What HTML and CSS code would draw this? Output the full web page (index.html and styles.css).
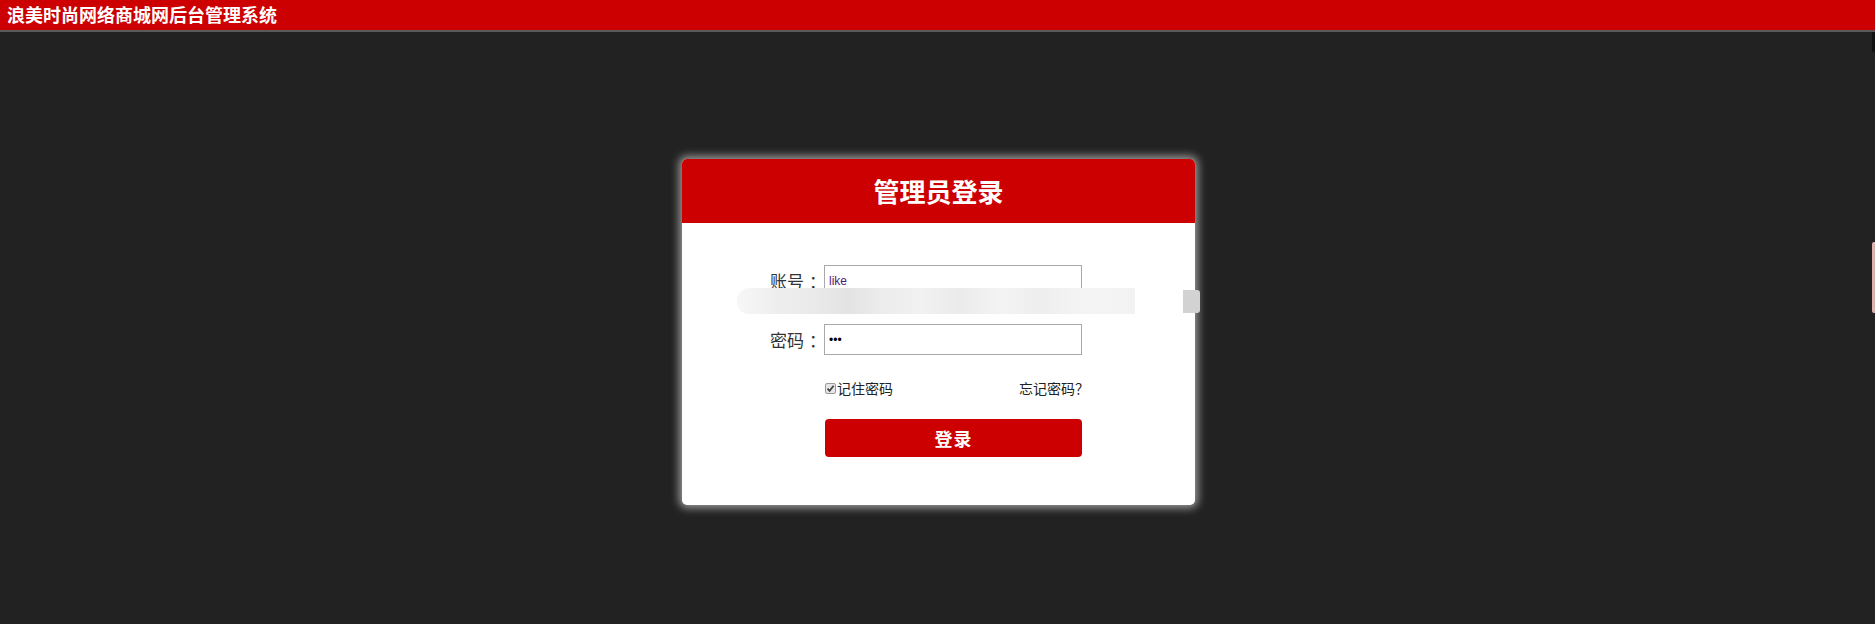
FILE: index.html
```html
<!DOCTYPE html>
<html lang="zh-CN">
<head>
  <meta charset="UTF-8">
  <meta name="viewport" content="width=device-width, initial-scale=1.0">
  <title>浪美时尚网络商城网后台管理系统</title>
  <link rel="stylesheet" href="styles.css">
</head>
<body>
  <div class="topbar">浪美时尚网络商城网后台管理系统</div>

  <div class="stage">
    <div class="login-box">
      <div class="login-head">管理员登录</div>
      <form class="login-form">
        <div class="row">
          <label class="label" for="user">账号<span class="colon">：</span></label>
          <input class="field user" id="user" type="text" value="like">
        </div>
        <div class="row">
          <label class="label" for="pwd">密码<span class="colon">：</span></label>
          <input class="field" id="pwd" type="password" value="123">
        </div>
        <div class="options">
          <label class="remember"><input class="check" type="checkbox" checked>记住密码</label>
          <a class="forgot" href="#">忘记密码？</a>
        </div>
        <button class="submit" type="button">登录</button>
      </form>
    </div>
  </div>

  <div class="blur-band"></div>
  <div class="blur-chip"></div>
  <div class="edge-bar"></div>
  <div class="edge-tab"></div>
</body>
</html>
```

FILE: styles.css
```css
body {
  margin: 0;
  padding: 0;
  background-color: #222222;
  font-family: "Noto Sans CJK SC", "Liberation Sans", sans-serif;
  height: 624px;
  overflow: hidden;
}

.topbar {
  height: 30px;
  line-height: 28px;
  padding-left: 7px;
  background-color: #cc0000;
  border-bottom: 2px solid #5a5a5a;
  color: #ffffff;
  font-size: 18px;
  font-weight: bold;
}

.stage {
  display: flex;
  justify-content: center;
  padding: 127px 0 0 2px;
}

.login-box {
  width: 513px;
  height: 346px;
  background-color: #ffffff;
  border-radius: 5px;
  box-shadow: 0 0 9px 3px rgba(255, 255, 255, 0.55);
  overflow: hidden;
}

.login-head {
  height: 64px;
  line-height: 64px;
  background-color: #cc0000;
  color: #ffffff;
  text-align: center;
  font-size: 26px;
  font-weight: bold;
}

.login-form {
  display: flex;
  flex-direction: column;
  padding: 42px 0 0 88px;
}

.row {
  display: flex;
  align-items: center;
}

.row + .row {
  margin-top: 28px;
}

.label {
  display: flex;
  width: 54px;
  font-size: 17px;
  color: #333333;
  white-space: nowrap;
}

.colon {
  display: inline-block;
  width: 10px;
  padding-left: 5px;
}

.field {
  box-sizing: border-box;
  width: 258px;
  height: 31px;
  margin: 0;
  padding: 0 4px;
  border: 1px solid #a9a9a9;
  border-radius: 0;
  font-size: 12px;
  color: #000000;
  outline: none;
}

.field.user {
  color: #4b1a7a;
}

.options {
  display: flex;
  justify-content: space-between;
  align-items: center;
  width: 264px;
  height: 20px;
  margin: 23px 0 0 55px;
  font-size: 14px;
  color: #222222;
}

.remember {
  display: flex;
  align-items: center;
}

.check {
  appearance: none;
  -webkit-appearance: none;
  box-sizing: border-box;
  width: 11px;
  height: 11px;
  margin: 0 1px 0 0;
  border: 1px solid #9a9a9a;
  border-radius: 2px;
  background: #e6e6e6 url("data:image/svg+xml,%3Csvg xmlns='http://www.w3.org/2000/svg' viewBox='0 0 9 9'%3E%3Cpath d='M1.5 4.6 L3.6 6.8 L7.6 1.8' fill='none' stroke='%23444' stroke-width='1.8'/%3E%3C/svg%3E") center / 9px 9px no-repeat;
}

.forgot {
  color: #222222;
  text-decoration: none;
}

.submit {
  width: 257px;
  height: 38px;
  margin: 21px 0 0 55px;
  border: none;
  border-radius: 4px;
  background-color: #cc0000;
  color: #ffffff;
  font-family: "Noto Sans CJK SC", sans-serif;
  font-size: 18px;
  font-weight: bold;
  letter-spacing: 1px;
}

/* blurred autofill overlay left in the screenshot */
.blur-band {
  position: absolute;
  left: 737px;
  top: 288px;
  width: 398px;
  height: 26px;
  border-radius: 12px 0 0 12px;
  background: linear-gradient(90deg,
    #f7f7f7 0%, #eeeeee 10%, #e9e9e9 20%, #e3e3e3 28%, #ececec 36%,
    #f1f1f1 46%, #ebebeb 56%, #f3f3f3 66%, #eeeeee 76%, #f4f4f4 88%, #f2f2f2 100%);
}

.blur-chip {
  position: absolute;
  left: 1183px;
  top: 290px;
  width: 17px;
  height: 23px;
  border-radius: 0 3px 3px 0;
  background-color: #d2d2d2;
}

.edge-bar {
  position: absolute;
  right: 0;
  top: 32px;
  width: 3px;
  height: 20px;
  background-color: #111111;
}

.edge-tab {
  position: absolute;
  right: 0;
  top: 242px;
  width: 3px;
  height: 71px;
  border-radius: 2px 0 0 2px;
  background-color: #dcb2ae;
}
```
